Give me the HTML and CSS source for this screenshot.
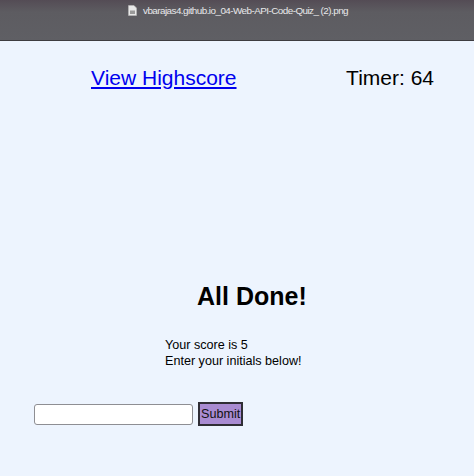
FILE: index.html
```html
<!DOCTYPE html>
<html lang="en">
<head>
    <meta charset="UTF-8">
    <title>Code Quiz</title>
    <link rel="stylesheet" href="styles.css">
</head>
<body>
    <div class="barra-titulo">
        <svg class="icone-arquivo" width="9" height="11" viewBox="0 0 9 11">
            <path d="M0.5 0.5h5.5l2.5 2.5v7.5h-8z" fill="#e8e8e8" stroke="#bbb" stroke-width="0.6"/>
            <rect x="2" y="5.5" width="5" height="3.5" fill="#9a9a9a"/>
        </svg>
        <span class="nome-arquivo">vbarajas4.github.io_04-Web-API-Code-Quiz_ (2).png</span>
    </div>

    <div class="pagina">
        <div class="topo">
            <a href="#" class="link-highscore">View Highscore</a>
            <span class="timer">Timer: 64</span>
        </div>

        <div class="final">
            <h1>All Done!</h1>
            <div class="resultado">
                <p>Your score is 5</p>
                <p>Enter your initials below!</p>
            </div>
            <form class="form-iniciais">
                <input type="text" class="campo-iniciais">
                <button type="submit" class="botao-enviar">Submit</button>
            </form>
        </div>
    </div>
</body>
</html>
```

FILE: styles.css
```css
body {
    margin: 0;
    padding: 0;
    font-family: "Liberation Sans", Arial, sans-serif;
    background-color: #edf4fe;
    height: 476px;
    overflow: hidden;
}

.barra-titulo {
    height: 41px;
    background: linear-gradient(#544c55, #5d5c61 30%, #5f5f64);
    border-bottom: 1px solid #3d3c40;
    display: flex;
    align-items: flex-start;
    padding: 4px 0 0 128px;
    box-sizing: border-box;
}

.icone-arquivo {
    margin-top: 1px;
    margin-right: 6px;
}

.nome-arquivo {
    color: #e8e8ea;
    font-size: 9.9px;
    letter-spacing: -0.55px;
    line-height: 13px;
}

.pagina {
    padding: 0 40px 0 91px;
}

.topo {
    display: flex;
    justify-content: space-between;
    align-items: baseline;
    margin-top: 25px;
    font-size: 21px;
}

.link-highscore {
    color: #0000ee;
}

.timer {
    color: #000;
}

.final h1 {
    font-size: 25px;
    margin: 192px 0 0 106px;
}

.resultado {
    margin: 26px 0 0 74px;
    font-size: 12.6px;
    line-height: 16px;
}

.resultado p {
    margin: 0;
}

.form-iniciais {
    display: flex;
    align-items: center;
    margin: 33px 0 0 -57px;
}

.campo-iniciais {
    width: 159px;
    height: 21px;
    box-sizing: border-box;
    border: 1px solid #8e8e93;
    border-radius: 3px;
    background: #fff;
    padding: 2px 4px;
}

.botao-enviar {
    margin-left: 5px;
    background-color: #a98bd2;
    border: 2px solid #2f2d35;
    font-family: "Liberation Sans", Arial, sans-serif;
    font-size: 12.6px;
    color: #111;
    padding: 3px 1px;
    height: 24px;
}
```
